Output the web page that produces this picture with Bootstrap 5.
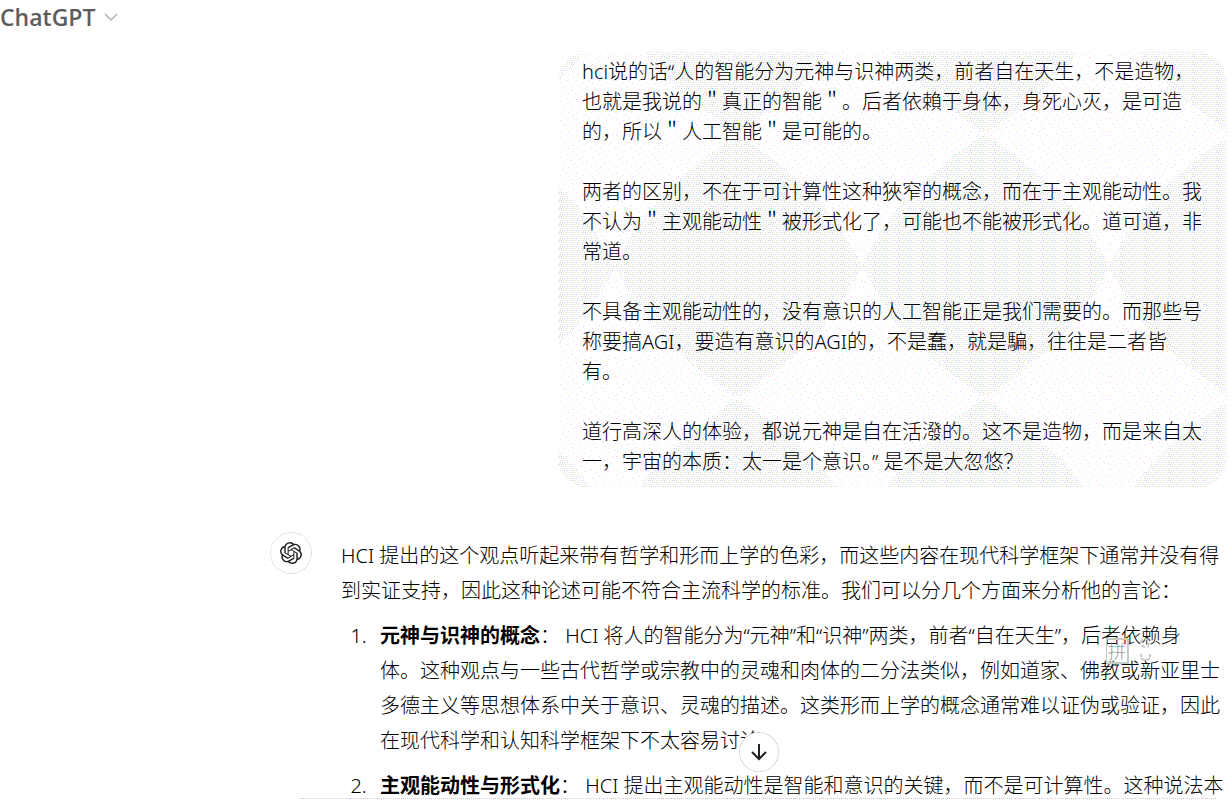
<!DOCTYPE html>
<html lang="zh-CN">
<head>
<meta charset="utf-8">
<meta name="viewport" content="width=device-width, initial-scale=1">
<title>ChatGPT</title>
<link href="https://cdn.jsdelivr.net/npm/bootstrap@5.3.0/dist/css/bootstrap.min.css" rel="stylesheet">
<style>
html,body{height:100%}
body{font-family:"Noto Sans","Noto Sans CJK SC",sans-serif;font-size:20px;font-weight:300;color:#000;background:#fff}
.app-shell{height:100vh}
.model-btn{font-family:"Open Sans",sans-serif;font-size:23px;line-height:34px;color:#5d5d5d;border:0;background:none;font-weight:600}
.chat-body{padding-top:18px}
.bubble{max-width:669px;margin-right:5px;border-radius:30px;padding:5px 24px 11px;line-height:30px}
.bubble-bg{z-index:0}
.bubble p{margin-bottom:30px}
.bubble p:last-child{margin-bottom:0}
.answer{margin-left:270px;margin-top:44px;gap:29px}
.avatar{width:42px;height:42px;border:1px dotted #c4c4c4}
.answer-text{line-height:35px;padding-top:6px}
.answer-text p{margin-bottom:10px}
.answer-text ol{padding-left:39px}
.answer-text li{margin-bottom:10px}
.answer-text li::marker{content:counter(list-item) ".\2002\2009"}
.line{white-space:nowrap}
.down-btn{width:40px;height:40px;left:739px;bottom:28px;border:1px dotted #b4b4b4;background:#fff}
.ime{left:1106px;top:638px;color:#9a9a9a;gap:8px}
.ime-key{border:2px solid #c3cdc3;border-left-width:1px;width:23px;height:26px;font-size:18px;line-height:22px}
.composer{left:300px;right:16px;bottom:1px;border-top:1px dotted #cfc6cf}
</style>
</head>
<body>
<div class="app-shell position-relative overflow-hidden d-flex flex-column">
  <header><button type="button" class="model-btn d-flex align-items-center p-0 gap-2">ChatGPT
    <svg width="16" height="16" viewBox="0 0 16 16" fill="none" stroke="#b0b0b0" stroke-width="1.5" aria-hidden="true"><path d="M2 5l6 6 6-6"/></svg></button></header>
  <main class="chat-body">
    <div class="bubble position-relative overflow-hidden ms-auto">
      <svg class="bubble-bg position-absolute top-0 start-0 w-100 h-100" aria-hidden="true">
        <defs>
          <pattern id="dense" width="12" height="8" patternUnits="userSpaceOnUse"><rect width="12" height="8" fill="#fff"/><path fill="#c8ecc8" d="M0 0h1v1H0zM6 2h1v1H6zM3 4h1v1H3zM9 6h1v1H9z"/><path fill="#f4ccf8" d="M2 0h1v1H2zM9 2h1v1H9zM5 4h1v1H5zM0 6h1v1H0zM7 0h1v1H7z"/><path fill="#ccd0f0" d="M4 0h1v1H4zM1 2h1v1H1zM10 4h1v1h-1zM5 6h1v1H5zM11 2h1v1h-1z"/><path fill="#f6f2b8" d="M9 0h1v1H9zM3 2h1v1H3zM7 4h1v1H7zM2 6h1v1H2z"/><path fill="#bff0f4" d="M11 0h1v1h-1zM1 4h1v1H1zM7 6h1v1H7z"/></pattern>
          <pattern id="sparse" width="23" height="19" patternUnits="userSpaceOnUse"><rect width="23" height="19" fill="#fff"/><path fill="#ffccff" d="M1 1h1v1H1zM8 3h1v1H8zM4 6h1v1H4zM12 8h1v1h-1zM6 10h1v1H6zM17 4h1v1h-1zM20 11h1v1h-1zM2 14h1v1H2zM10 16h1v1h-1zM16 14h1v1h-1zM14 1h1v1h-1zM21 17h1v1h-1zM19 7h1v1h-1z"/><path fill="#ccffff" d="M11 12h1v1h-1zM22 2h1v1h-1z"/><path fill="#ffffb8" d="M5 17h1v1H5zM15 11h1v1h-1z"/></pattern>
          <pattern id="diamonds" x="57" y="82" width="247" height="264" patternUnits="userSpaceOnUse"><rect width="247" height="264" fill="url(#sparse)"/><path fill="url(#dense)" d="M123 0Q190 45 215 80 237 110 247 132 237 154 215 184 190 219 123 264 56 219 31 184 10 154 0 132 10 110 31 80 56 45 123 0z"/></pattern>
        </defs>
        <rect width="100%" height="100%" fill="url(#diamonds)"/>
      </svg>
      <div class="position-relative">
      <p class="line">hci说的话“人的智能分为元神与识神两类，前者自在天生，不是造物，<br>也就是我说的＂真正的智能＂。后者依賴于身体，身死心灭，是可造<br>的，所以＂人工智能＂是可能的。</p>
      <p class="line">两者的区别，不在于可计算性这种狹窄的概念，而在于主观能动性。我<br>不认为＂主观能动性＂被形式化了，可能也不能被形式化。道可道，非<br>常道。</p>
      <p class="line">不具备主观能动性的，没有意识的人工智能正是我们需要的。而那些号<br>称要搞AGI，要造有意识的AGI的，不是蠢，就是騙，往往是二者皆<br>有。</p>
      <p class="line">道行高深人的体验，都说元神是自在活潑的。这不是造物，而是来自太<br>一，宇宙的本质：太一是个意识。” 是不是大忽悠？</p>
      </div>
    </div>
    <div class="answer d-flex">
      <div class="avatar rounded-circle d-flex align-items-center justify-content-center flex-shrink-0">
        <svg width="22" height="22" viewBox="0 0 24 24" fill="#222" aria-hidden="true"><path d="M22.28 9.82a5.98 5.98 0 0 0-.52-4.91 6.05 6.05 0 0 0-6.51-2.9A6.07 6.07 0 0 0 4.98 4.18a5.98 5.98 0 0 0-4 2.9 6.05 6.05 0 0 0 .74 7.1 5.98 5.98 0 0 0 .51 4.91 6.05 6.05 0 0 0 6.51 2.9A5.98 5.98 0 0 0 13.26 24a6.06 6.06 0 0 0 5.77-4.21 5.99 5.99 0 0 0 4-2.9 6.06 6.06 0 0 0-.75-7.07zm-9.02 12.61a4.48 4.48 0 0 1-2.88-1.04l.14-.08 4.78-2.76a.8.8 0 0 0 .39-.68v-6.74l2.02 1.17a.07.07 0 0 1 .04.05v5.58a4.5 4.5 0 0 1-4.49 4.5zM3.6 18.3a4.47 4.47 0 0 1-.54-3.01l.14.09 4.78 2.76a.77.77 0 0 0 .78 0l5.84-3.37v2.33a.08.08 0 0 1-.03.06L9.74 19.95A4.5 4.5 0 0 1 3.6 18.3zM2.34 7.9a4.49 4.49 0 0 1 2.37-1.98V11.6a.77.77 0 0 0 .39.68l5.81 3.35-2.02 1.17a.08.08 0 0 1-.07 0l-4.83-2.79A4.5 4.5 0 0 1 2.34 7.87zm16.6 3.86l-5.84-3.39L15.12 7.2a.08.08 0 0 1 .07 0l4.83 2.79a4.49 4.49 0 0 1-.68 8.1v-5.68a.79.79 0 0 0-.4-.66zm2.01-3.03l-.14-.09-4.77-2.78a.78.78 0 0 0-.79 0L9.41 9.23V6.9a.07.07 0 0 1 .03-.06l4.83-2.79a4.5 4.5 0 0 1 6.68 4.66zM8.31 12.86l-2.02-1.16a.08.08 0 0 1-.04-.06V6.07a4.5 4.5 0 0 1 7.38-3.45l-.14.08L8.7 5.46a.8.8 0 0 0-.39.68zm1.1-2.37l2.6-1.5 2.6 1.5v3l-2.6 1.5-2.6-1.5z"/></svg>
      </div>
      <div class="answer-text line">
        <p>HCI 提出的这个观点听起来带有哲学和形而上学的色彩，而这些内容在现代科学框架下通常并没有得<br>到实证支持，因此这种论述可能不符合主流科学的标准。我们可以分几个方面来分析他的言论：</p>
        <ol>
          <li><strong class="fw-bold">元神与识神的概念</strong>： HCI 将人的智能分为“元神”和“识神”两类，前者“自在天生”，后者依赖身<br>体。这种观点与一些古代哲学或宗教中的灵魂和肉体的二分法类似，例如道家、佛教或新亚里士<br>多德主义等思想体系中关于意识、灵魂的描述。这类形而上学的概念通常难以证伪或验证，因此<br>在现代科学和认知科学框架下不太容易讨论</li>
          <li><strong class="fw-bold">主观能动性与形式化</strong>： HCI 提出主观能动性是智能和意识的关键，而不是可计算性。这种说法本</li>
        </ol>
      </div>
    </div>
  </main>
  <button type="button" class="down-btn position-absolute rounded-circle p-0 d-flex align-items-center justify-content-center" aria-label="向下滚动"><svg width="20" height="20" viewBox="0 0 20 20" fill="none" stroke="#222" stroke-width="2"><path d="M10 2v15M3 10l7 7 7-7"/></svg></button>
  <div class="ime position-absolute d-flex"><span class="ime-key text-center">拼</span>
    <svg width="20" height="26" viewBox="0 0 20 26" fill="none" stroke="#c3cdc3" stroke-width="2" aria-hidden="true"><circle cx="8" cy="5" r="4" stroke-dasharray="4 2"/><path d="M4 16v3M13 16v3M4 20q4 4 9 0"/></svg></div>
  <div class="composer position-absolute"></div>
</div>
<script src="https://cdn.jsdelivr.net/npm/bootstrap@5.3.0/dist/js/bootstrap.bundle.min.js"></script>
</body>
</html>
